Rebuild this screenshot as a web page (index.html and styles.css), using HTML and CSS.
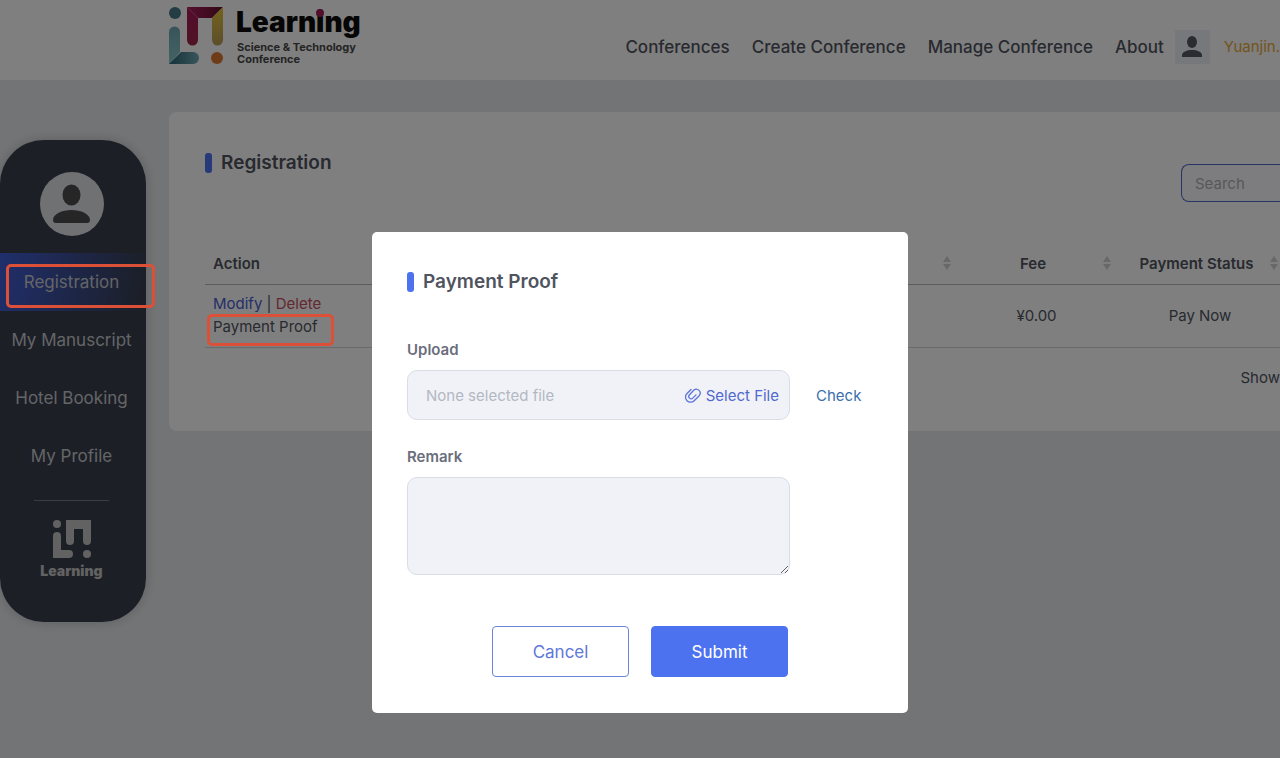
FILE: index.html
```html
<!DOCTYPE html>
<html lang="en">
<head>
    <meta charset="UTF-8">
    <meta name="viewport" content="width=device-width, initial-scale=1.0">
    <title>Registration</title>
    <link rel="stylesheet" href="styles.css">
</head>
<body>
    <header class="header">
        <a href="#" class="logo">
            <svg width="196" height="60" viewBox="0 0 196 60">
                <defs>
                    <linearGradient id="teal" x1="0" y1="0" x2="0" y2="1">
                        <stop offset="0" stop-color="#70a8b4"/>
                        <stop offset="1" stop-color="#8ac8c8"/>
                    </linearGradient>
                    <linearGradient id="teal-foot" x1="0" y1="0" x2="1" y2="0">
                        <stop offset="0" stop-color="#286474"/>
                        <stop offset="1" stop-color="#70acb4"/>
                    </linearGradient>
                    <linearGradient id="plum" x1="0" y1="0" x2="0" y2="1">
                        <stop offset="0" stop-color="#a81858"/>
                        <stop offset="1" stop-color="#a02848"/>
                    </linearGradient>
                    <linearGradient id="plum-top" x1="0" y1="0" x2="1" y2="0">
                        <stop offset="0" stop-color="#b01c60"/>
                        <stop offset="1" stop-color="#60142c"/>
                    </linearGradient>
                    <linearGradient id="gold" x1="0" y1="0" x2="0" y2="1">
                        <stop offset="0" stop-color="#e8c838"/>
                        <stop offset="1" stop-color="#b89c58"/>
                    </linearGradient>
                </defs>
                <circle cx="6" cy="6" r="6" fill="#487888"/>
                <path d="M0 25a5.500 5.500 0 0 1 11 0v20L0 57z" fill="url(#teal)"/>
                <path d="M0 57l12-12h12a6 6 0 0 1 0 12z" fill="url(#teal-foot)"/>
                <path d="M18 0l11 11v22a5.500 5.500 0 0 1-11 0z" fill="url(#plum)"/>
                <path d="M18 0h36L43 11H29z" fill="url(#plum-top)"/>
                <path d="M54 0v33a5.500 5.500 0 0 1-11 0V11z" fill="url(#gold)"/>
                <circle cx="48" cy="51" r="6" fill="#dc7830"/>
                <text x="67" y="25" class="logo-name">Learning</text>
                <circle cx="151" cy="6" r="4" fill="#a02058"/>
                <text x="68" y="44" class="logo-sub">Science &amp; Technology</text>
                <text x="68" y="56" class="logo-sub">Conference</text>
            </svg>
        </a>
        <nav class="main-nav">
            <a href="#">Conferences</a>
            <a href="#">Create Conference</a>
            <a href="#">Manage Conference</a>
            <a href="#">About</a>
        </nav>
        <div class="user">
            <span class="user-icon">
                <svg width="20" height="22" viewBox="0 0 20 22" fill="#555863">
                    <ellipse cx="10" cy="6" rx="5" ry="6"/>
                    <path d="M0 21v-2c0-3 5-5 10-5s10 2 10 5v2z"/>
                </svg>
            </span>
            <a href="#" class="user-name">Yuanjin.</a>
        </div>
    </header>

    <div class="layout">
        <aside class="sidebar">
            <div class="avatar">
                <svg width="37" height="40" viewBox="0 0 37 40" fill="#4c4c4e">
                    <ellipse cx="18.500" cy="11" rx="9" ry="10.500"/>
                    <path d="M0 39v-3c0-6 9-10 18.500-10S37 30 37 36c0 2-1 3-3 3H3c-2 0-3-1-3-3z"/>
                </svg>
            </div>
            <nav class="side-nav">
                <a href="#" class="active">Registration</a>
                <a href="#">My Manuscript</a>
                <a href="#">Hotel Booking</a>
                <a href="#">My Profile</a>
            </nav>
            <hr>
            <div class="side-logo">
                <svg width="38" height="40" viewBox="0 0 38 40" fill="#c4c4c4">
                    <circle cx="4" cy="5" r="4"/>
                    <path d="M0 17a4 4 0 0 1 8 0v14h8a4 4 0 0 1 0 8H0z"/>
                    <path d="M13 1h25v21a4 4 0 0 1-8 0V10h-9v12a4 4 0 0 1-8 0z"/>
                    <circle cx="34" cy="35" r="4"/>
                </svg>
                <span>Learning</span>
            </div>
        </aside>

        <main class="card">
            <h1 class="title">Registration</h1>
            <div class="search">
                <input type="search" placeholder="Search" aria-label="Search">
            </div>
            <table>
                <thead>
                    <tr>
                        <th class="col-action">Action</th>
                        <th><i class="sort"></i></th>
                        <th class="col-fee">Fee<i class="sort"></i></th>
                        <th class="col-status">Payment Status<i class="sort"></i></th>
                    </tr>
                </thead>
                <tbody>
                    <tr>
                        <td class="col-action">
                            <a href="#" class="modify">Modify</a> | <a href="#" class="delete">Delete</a><br>
                            <a href="#" class="proof">Payment Proof</a>
                        </td>
                        <td></td>
                        <td>¥0.00</td>
                        <td>Pay Now</td>
                    </tr>
                </tbody>
            </table>
            <p class="table-info">Show</p>
        </main>
    </div>

    <div class="overlay">
        <form class="modal">
            <h2 class="title">Payment Proof</h2>
            <label for="upload">Upload</label>
            <div class="upload-row">
                <div class="file-box">
                    <input type="text" id="upload" placeholder="None selected file" readonly>
                    <button type="button" class="select-file">
                        <svg width="18" height="18" viewBox="0 0 18 18" fill="none" stroke="#5b74d8" stroke-width="1.300" stroke-linecap="round">
                            <path d="M7 3.500L3 7.500a5 5 0 0 0 7.200 7.200l5-5a3.900 3.900 0 0 0-5.500-5.500L5.500 8.800a2.300 2.300 0 0 0 3.300 3.300L12 8.900"/>
                        </svg>
                        Select File
                    </button>
                </div>
                <a href="#" class="check">Check</a>
            </div>
            <label for="remark">Remark</label>
            <textarea id="remark"></textarea>
            <div class="buttons">
                <button type="button" class="cancel">Cancel</button>
                <button type="submit" class="submit">Submit</button>
            </div>
        </form>
    </div>
</body>
</html>
```
FILE: styles.css
```css
*, *::before, *::after {
    box-sizing: border-box;
}
body {
    margin: 0;
    min-height: 100vh;
    font-family: Inter, "Liberation Sans", sans-serif;
    font-size: 15px;
    line-height: 23px;
    color: #50545f;
    background-color: #e6e9ed;
    overflow: hidden;
}
a {
    color: inherit;
    text-decoration: none;
}
button, input, textarea {
    font-family: inherit;
    font-size: 15px;
}

/* header */
.header {
    display: flex;
    align-items: center;
    height: 80px;
    padding-left: 169px;
    background-color: #fff;
}
.logo {
    height: 66px;
}
.logo svg {
    display: block;
    overflow: visible;
}
.logo-name {
    font-size: 28px;
    font-weight: 900;
    fill: #0c0c0c;
}
.logo-sub {
    font-size: 11px;
    font-weight: 700;
    fill: #484848;
}
.main-nav {
    display: flex;
    gap: 22px;
    margin-left: auto;
    padding-top: 14px;
    font-size: 17px;
    font-weight: 500;
}
.user {
    display: flex;
    align-items: center;
    gap: 14px;
    margin-left: 11px;
    padding-top: 13px;
}
.user-icon {
    display: flex;
    align-items: center;
    justify-content: center;
    width: 35px;
    height: 34px;
    background-color: #eef1f8;
}
.user-name {
    color: #e8a838;
}

/* page */
.layout {
    display: flex;
    align-items: flex-start;
    gap: 23px;
    padding-top: 32px;
}
.sidebar {
    position: relative;
    flex: none;
    width: 146px;
    margin-top: 28px;
    padding: 32px 3px 40px 0;
    border-radius: 44px;
    background-color: #383e4c;
    box-shadow: 0 0 12px rgba(0, 0, 0, 0.2);
}
.avatar {
    display: flex;
    align-items: center;
    justify-content: center;
    width: 64px;
    height: 64px;
    margin: 0 auto 17px;
    border-radius: 50%;
    background-color: #e0e2e6;
}
.side-nav a {
    display: block;
    height: 58px;
    font-size: 17px;
    line-height: 58px;
    text-align: center;
    color: #c8cacf;
}
.side-nav .active {
    position: relative;
    background-image: linear-gradient(100deg, #405ed8, #3c4d92 50%, #383e4c);
}
.side-nav .active::after, .proof::after {
    content: "";
    position: absolute;
    z-index: 20;
    border: 3px solid #dc5038;
    border-radius: 5px;
}
.side-nav .active::after {
    top: 11px;
    left: 6px;
    width: 149px;
    height: 44px;
}
.sidebar hr {
    width: 75px;
    height: 1px;
    margin: 15px auto 18px;
    border: none;
    background-color: #757a85;
}
.side-logo {
    display: flex;
    flex-direction: column;
    align-items: center;
    font-size: 14px;
    font-weight: 900;
    color: #c4c4c4;
}
.card {
    flex: 1;
    padding: 38px 0 42px 36px;
    border-radius: 8px 0 0 8px;
    background-color: #fff;
}
.title {
    display: flex;
    align-items: center;
    gap: 9px;
    margin: 0;
    font-size: 19px;
    font-weight: 600;
    line-height: 26px;
}
.title::before {
    content: "";
    width: 7px;
    height: 20px;
    border-radius: 3px;
    background-color: #4c72f0;
}
.search {
    display: flex;
    justify-content: flex-end;
    margin: -12px 0 40px;
}
.search input {
    width: 99px;
    height: 38px;
    padding: 0 13px;
    border: 1px solid #5068c8;
    border-right: none;
    border-radius: 8px 0 0 8px;
    background-color: #fafbff;
}
.search input::placeholder {
    color: #b0b0b0;
}
table {
    width: 100%;
    border-collapse: collapse;
    table-layout: fixed;
}
th, td {
    position: relative;
    padding: 7px 8px 9px;
    text-align: center;
    border-bottom: 1px solid #d4d4d4;
}
th {
    padding: 10px 8px 9px;
    font-weight: 600;
    white-space: nowrap;
    border-bottom-color: #b8b8b8;
}
td {
    padding-left: 15px;
}
.col-action {
    width: 200px;
    padding-left: 8px;
    text-align: left;
}
.col-fee {
    width: 160px;
}
.col-status {
    width: 167px;
}
.sort {
    position: absolute;
    top: 14px;
    right: 2px;
}
.sort::before, .sort::after {
    content: "";
    display: block;
    margin-bottom: 2px;
    border: 4px solid transparent;
}
.sort::before {
    border-top: none;
    border-bottom: 6px solid #d0d0d0;
}
.sort::after {
    border-bottom: none;
    border-top: 6px solid #d0d0d0;
}
.modify {
    color: #4860d0;
}
.delete {
    color: #c85060;
}
.proof {
    position: relative;
}
.proof::after {
    top: -3px;
    left: -6px;
    width: 127px;
    height: 32px;
}
.table-info {
    margin: 18px 0 0;
    text-align: right;
}

/* dialog */
.overlay {
    position: fixed;
    inset: 0;
    z-index: 10;
    background-color: rgba(0, 0, 0, 0.5);
}
.modal {
    width: 536px;
    margin: 232px auto 0;
    padding: 37px 35px 36px;
    border-radius: 5px;
    background-color: #fff;
}
.modal .title {
    margin-bottom: 45px;
}
.modal label {
    display: block;
    margin-bottom: 10px;
    line-height: 20px;
    font-weight: 600;
    color: #6a6e7c;
}
.upload-row {
    display: flex;
    align-items: center;
    gap: 26px;
    margin-bottom: 27px;
}
.file-box {
    display: flex;
    align-items: center;
    width: 383px;
    height: 50px;
    padding: 0 10px 0 18px;
    border: 1px solid #d8dde6;
    border-radius: 10px;
    background-color: #f0f2f7;
}
.file-box input {
    flex: 1;
    min-width: 0;
    padding: 0;
    border: none;
    background: none;
}
.file-box input::placeholder {
    color: #b4b8c2;
}
.select-file {
    display: flex;
    align-items: center;
    gap: 4px;
    padding: 0;
    border: none;
    background: none;
    color: #5068d0;
}
.check {
    color: #3a6fac;
}
.modal textarea {
    display: block;
    width: 383px;
    height: 98px;
    border: 1px solid #d8dde6;
    border-radius: 10px;
    background-color: #f0f2f7;
}
.buttons {
    display: flex;
    justify-content: center;
    gap: 22px;
    margin-top: 51px;
}
.buttons button {
    width: 137px;
    height: 51px;
    border: 1px solid #6c84d8;
    border-radius: 4px;
    font-size: 17px;
}
.cancel {
    background-color: #fff;
    color: #6078d8;
}
.buttons .submit {
    border-color: #4c72f0;
    background-color: #4c72f0;
    color: #fff;
}
```
